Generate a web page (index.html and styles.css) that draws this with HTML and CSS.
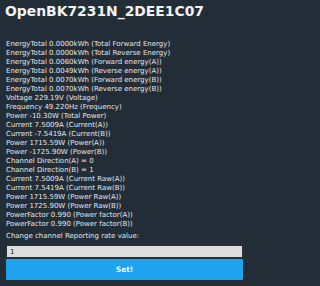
FILE: index.html
```html
<!DOCTYPE html>
<html>
<head>
<meta charset="utf-8">
<link rel="stylesheet" href="styles.css">
</head>
<body>
<div class="page">
  <h1 class="title">OpenBK7231N_2DEE1C07</h1>
  <div class="readings">
    <div>EnergyTotal 0.0000kWh (Total Forward Energy)</div>
    <div>EnergyTotal 0.0000kWh (Total Reverse Energy)</div>
    <div>EnergyTotal 0.0060kWh (Forward energy(A))</div>
    <div>EnergyTotal 0.0049kWh (Reverse energy(A))</div>
    <div>EnergyTotal 0.0070kWh (Forward energy(B))</div>
    <div>EnergyTotal 0.0070kWh (Reverse energy(B))</div>
    <div>Voltage 229.19V (Voltage)</div>
    <div>Frequency 49.220Hz (Frequency)</div>
    <div>Power -10.30W (Total Power)</div>
    <div>Current 7.5009A (Current(A))</div>
    <div>Current -7.5419A (Current(B))</div>
    <div>Power 1715.59W (Power(A))</div>
    <div>Power -1725.90W (Power(B))</div>
    <div>Channel Direction(A) = 0</div>
    <div>Channel Direction(B) = 1</div>
    <div>Current 7.5009A (Current Raw(A))</div>
    <div>Current 7.5419A (Current Raw(B))</div>
    <div>Power 1715.59W (Power Raw(A))</div>
    <div>Power 1725.90W (Power Raw(B))</div>
    <div>PowerFactor 0.990 (Power factor(A))</div>
    <div>PowerFactor 0.990 (Power factor(B))</div>
  </div>
  <form class="form">
    <label class="label" for="rate">Change channel Reporting rate value:</label>
    <input class="field" id="rate" type="text" value="1">
    <button class="btn" type="button">Set!</button>
  </form>
</div>
</body>
</html>
```

FILE: styles.css
```css
html, body {
  margin: 0;
  padding: 0;
  background: #222d38;
}
body {
  font-family: "DejaVu Sans", Verdana, sans-serif;
  color: #e6e6e6;
}
.page {
  padding: 0 6px 0 6px;
  display: flex;
  flex-direction: column;
}
.title {
  margin: 0;
  padding-top: 2px;
  font-size: 13.9px;
  line-height: 18px;
  font-weight: bold;
  color: #f2f2f2;
  margin-left: -1px;
}
.readings {
  margin-top: 20px;
  font-size: 7px;
  line-height: 9px;
}
.form {
  display: flex;
  flex-direction: column;
  margin-top: 3px;
}
.label {
  font-size: 7px;
  line-height: 9px;
  margin-bottom: 4px;
}
.field {
  box-sizing: border-box;
  height: 13px;
  width: 237px;
  margin: 0;
  border: 1px solid #2a333c;
  background: #dddddd;
  color: #111;
  font-family: "DejaVu Sans", sans-serif;
  font-size: 7px;
  padding: 0 3px;
  outline: none;
}
.btn {
  box-sizing: border-box;
  height: 21px;
  width: 237px;
  margin-top: 1px;
  border: 0;
  background: #1fa3ec;
  color: #f4f8fb;
  font-family: "DejaVu Sans", sans-serif;
  font-size: 7.5px;
  font-weight: 600;
  border-radius: 1px;
}
```
